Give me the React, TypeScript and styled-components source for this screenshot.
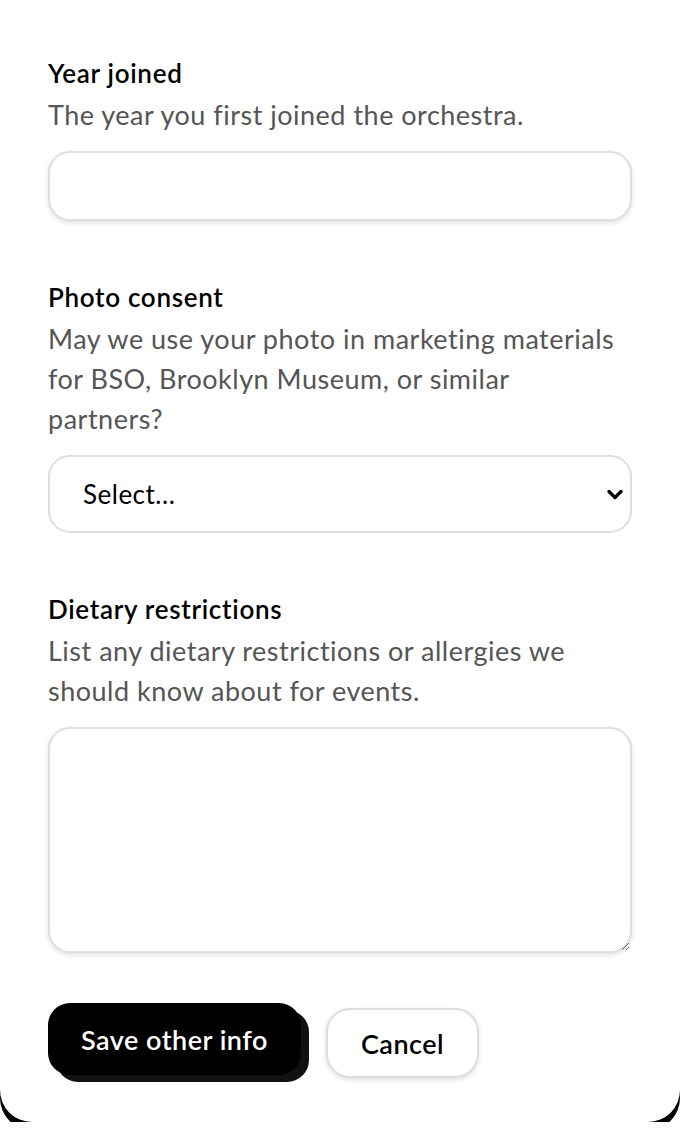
import React from "react";
import styled, { createGlobalStyle } from "styled-components";

const GlobalStyle = createGlobalStyle`
  html, body {
    margin: 0;
    padding: 0;
    background: #ffffff;
  }
  body {
    font-family: Lato, "Noto Sans", sans-serif;
    color: #000;
  }
  * { box-sizing: border-box; }
`;

const Card = styled.div`
  width: 680px;
  background: #fff;
  border-radius: 0 0 32px 32px;
  box-shadow: 0 8px 0 #000;
  padding: 57px 48px 44px;
  display: flex;
  flex-direction: column;
`;

const Field = styled.div<{ $gap: number }>`
  display: flex;
  flex-direction: column;
  margin-bottom: ${(p) => p.$gap}px;
`;

const Label = styled.label`
  font-size: 26px;
  font-weight: 600;
  letter-spacing: 0.7px;
  line-height: 32px;
  color: #000;
  margin-bottom: 6px;
`;

const Description = styled.p`
  margin: 0 0 16px;
  font-size: 27px;
  letter-spacing: 0.5px;
  line-height: 40px;
  color: #555;
`;

const controlBase = `
  width: 100%;
  border: 2px solid #dedede;
  border-radius: 22px;
  background: #fff;
  box-shadow: 0 2px 5px rgba(0, 0, 0, 0.12);
  font-family: Lato, "Noto Sans", sans-serif;
  font-size: 26px;
  letter-spacing: 0.5px;
  color: #000;
  outline: none;
`;

const TextInput = styled.input`
  ${controlBase}
  height: 70px;
  padding: 0 32px;
`;

const SelectWrap = styled.div`
  position: relative;
  width: 100%;
`;

const Select = styled.select`
  ${controlBase}
  appearance: none;
  -webkit-appearance: none;
  height: 78px;
  padding: 0 40px 0 33px;
  box-shadow: none;
`;

const Chevron = styled.svg`
  position: absolute;
  right: 9px;
  top: 50%;
  width: 16px;
  height: 11px;
  margin-top: -5px;
  pointer-events: none;
`;

const TextArea = styled.textarea`
  ${controlBase}
  height: 226px;
  padding: 20px 32px;
  resize: vertical;
  display: block;
`;

const Actions = styled.div`
  display: flex;
  align-items: flex-start;
  gap: 25px;
`;

const PrimaryButton = styled.button`
  height: 72px;
  padding: 0 33px;
  border: none;
  border-radius: 22px;
  background: #000;
  color: #fff;
  font-family: Lato, "Noto Sans", sans-serif;
  font-size: 27px;
  letter-spacing: 0.5px;
  font-weight: 600;
  box-shadow: 8px 7px 0 #111;
  cursor: pointer;
`;

const SecondaryButton = styled.button`
  margin-top: 5px;
  height: 70px;
  padding: 0 33px;
  border: 2px solid #dedede;
  border-radius: 24px;
  background: #fff;
  color: #000;
  font-family: Lato, "Noto Sans", sans-serif;
  font-size: 27px;
  letter-spacing: 0.5px;
  font-weight: 600;
  box-shadow: 0 2px 5px rgba(0, 0, 0, 0.12);
  cursor: pointer;
`;

export default function App() {
  return (
    <>
      <GlobalStyle />
      <Card>
        <Field $gap={60}>
          <Label htmlFor="year">Year joined</Label>
          <Description>The year you first joined the orchestra.</Description>
          <TextInput id="year" type="text" />
        </Field>
        <Field $gap={60}>
          <Label htmlFor="photo">Photo consent</Label>
          <Description>
            May we use your photo in marketing materials
            <br />
            for BSO, Brooklyn Museum, or similar
            <br />
            partners?
          </Description>
          <SelectWrap>
            <Select id="photo" defaultValue="">
              <option value="">Select...</option>
              <option value="yes">Yes</option>
              <option value="no">No</option>
            </Select>
            <Chevron viewBox="0 0 16 11" fill="none">
              <path d="M2 2.5 L8 8.5 L14 2.5" stroke="#000" strokeWidth="3.2" strokeLinecap="round" strokeLinejoin="round" />
            </Chevron>
          </SelectWrap>
        </Field>
        <Field $gap={50}>
          <Label htmlFor="diet">Dietary restrictions</Label>
          <Description>
            List any dietary restrictions or allergies we
            <br />
            should know about for events.
          </Description>
          <TextArea id="diet" />
        </Field>
        <Actions>
          <PrimaryButton type="button">Save other info</PrimaryButton>
          <SecondaryButton type="button">Cancel</SecondaryButton>
        </Actions>
      </Card>
    </>
  );
}
